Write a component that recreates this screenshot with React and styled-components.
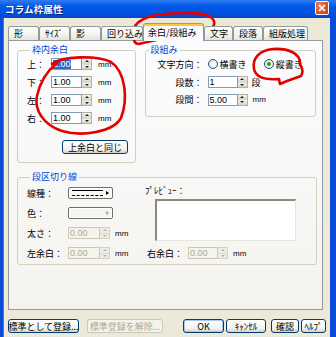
import React from 'react';
import styled, { createGlobalStyle } from 'styled-components';

const GlobalStyle = createGlobalStyle`
  html, body { margin: 0; padding: 0; background: #ECE9D8; }
  body {
    font-family: "Noto Sans CJK JP", "Noto Sans", sans-serif;
    font-size: 9px;
    color: #000;
  }
`;

const Window = styled.div`
  position: relative;
  width: 336px;
  height: 337px;
  overflow: hidden;
  display: flex;
  flex-direction: column;
  background: #ECE9D8;
`;

const TitleBar = styled.div`
  height: 18px;
  flex-shrink: 0;
  display: flex;
  align-items: center;
  justify-content: space-between;
  padding: 0 7px 0 5px;
  background: linear-gradient(#2F7DF2, #0058E8 35%, #0052DD 75%, #0847C4);
`;

const Title = styled.span`
  color: #fff;
  font-weight: bold;
  font-size: 9.5px;
  letter-spacing: 0.2px;
  text-shadow: 1px 1px 0 #0A1E7A;
`;

const CloseBtn = styled.div`
  width: 14px;
  height: 14px;
  box-sizing: border-box;
  margin-top: -2px;
  border: 1px solid #fff;
  border-radius: 2px;
  background: radial-gradient(circle at 35% 35%, #F08A6A, #D8461F 70%, #B93510);
  display: flex;
  align-items: center;
  justify-content: center;
`;

const Frame = styled.div`
  flex: 1;
  display: flex;
  flex-direction: column;
  padding: 5px 7px 0 5px;
  border-left: 3px solid #0A4BD8;
  border-right: 6px solid #0A4BD8;
  box-shadow: inset 1px 0 0 #3D7BEA;
`;

const TabStrip = styled.div`
  display: flex;
  align-items: flex-end;
  height: 17px;
  position: relative;
  z-index: 1;
`;

const Tab = styled.div`
  box-sizing: border-box;
  width: ${p => p.$w}px;
  height: ${p => (p.$active ? 18 : 14)}px;
  margin-bottom: ${p => (p.$active ? -1 : 0)}px;
  padding-left: ${p => (p.$active ? 4 : 5)}px;
  border: 1px solid #919B9C;
  border-bottom: none;
  border-radius: 3px 3px 0 0;
  background: ${p => (p.$active ? '#FCFCFE' : 'linear-gradient(#FFFFFF, #F3F2EC 60%, #E6E4DA)')};
  box-shadow: ${p => (p.$active ? 'inset 0 2px 0 #FFC83C' : 'none')};
  display: flex;
  align-items: center;
  white-space: nowrap;
  overflow: hidden;
  font-size: 9px;
`;

const Panel = styled.div`
  box-sizing: border-box;
  height: 270px;
  border: 1px solid #919B9C;
  background: linear-gradient(#FCFCFE, #F4F3EE);
  padding: 4px 6px 0 8px;
  display: flex;
  flex-direction: column;
  gap: 9px;
`;

const TopRow = styled.div`
  display: flex;
  gap: 9px;
  align-items: flex-start;
`;

const Group = styled.fieldset`
  margin: 0;
  box-sizing: border-box;
  width: ${p => p.$w}px;
  height: ${p => p.$h}px;
  border: 1px solid #D0D0BF;
  border-radius: 3px;
  padding: ${p => p.$pad || '0 0 0 9px'};
`;

const Legend = styled.legend`
  color: #0046D5;
  padding: 0 2px;
  margin-left: 3px;
  font-size: 9px;
  line-height: 10px;
`;

const Row = styled.div`
  display: flex;
  align-items: center;
  height: ${p => p.$h || 18}px;
`;

const Label = styled.span`
  display: inline-block;
  width: ${p => p.$w}px;
  flex-shrink: 0;
  text-align: ${p => (p.$right ? 'right' : 'left')};
  padding-right: ${p => (p.$right ? 5 : 0)}px;
  box-sizing: border-box;
  color: ${p => (p.$dim ? '#000' : '#000')};
  white-space: nowrap;
`;

const Input = styled.div`
  box-sizing: border-box;
  width: ${p => p.$w || 31}px;
  height: 12px;
  border: 1px solid ${p => (p.$disabled ? '#C9C7BA' : '#7F9DB9')};
  background: ${p => (p.$disabled ? '#F5F4EA' : '#fff')};
  color: ${p => (p.$disabled ? '#ACA899' : '#000')};
  font-family: "Liberation Sans", "Noto Sans", sans-serif;
  font-size: 9px;
  line-height: 10px;
  padding-left: 1px;
  display: flex;
  align-items: center;
`;

const Selected = styled.span`
  background: #316AC5;
  color: #fff;
  line-height: 9px;
`;

const SpinBox = styled.div`
  box-sizing: border-box;
  width: ${p => p.$w || 10}px;
  height: 12px;
  display: flex;
  flex-direction: column;
  border: 1px solid ${p => (p.$disabled ? '#D5D2C4' : '#B5B2A4')};
  border-left: none;
  background: ${p => (p.$disabled ? '#F2F1EA' : '#fff')};
`;

const SpinHalf = styled.div`
  flex: 1;
  display: flex;
  align-items: center;
  justify-content: center;
  background: ${p => (p.$disabled ? '#EEEDE5' : 'linear-gradient(#F4F3EE, #D8D4C6)')};
  & + & { border-top: 1px solid ${p => (p.$disabled ? '#DDDAD0' : '#B9B5A5')}; }
`;

const Arrow = styled.div`
  width: 0;
  height: 0;
  border-left: 2px solid transparent;
  border-right: 2px solid transparent;
  ${p => (p.$up ? 'border-bottom' : 'border-top')}: 2px solid ${p => (p.$disabled ? '#B8B5A8' : '#222')};
`;

const Unit = styled.span`
  margin-left: ${p => p.$ml || 5}px;
  font-family: "Liberation Sans", "Noto Sans", sans-serif;
  font-size: ${p => (p.$jp ? 9 : 8)}px;
  ${p => p.$jp && 'font-family: "Noto Sans CJK JP", sans-serif;'}
`;

const Button = styled.div`
  box-sizing: border-box;
  width: ${p => p.$w}px;
  height: ${p => p.$h || 14}px;
  margin-left: ${p => p.$ml || 0}px;
  border: 1px solid ${p => (p.$disabled ? '#C9C7BA' : '#003C74')};
  border-radius: 3px;
  background: ${p => (p.$disabled ? '#F5F4EA' : 'linear-gradient(#FFFFFF, #F3F2EC 70%, #D6D0C5)')};
  box-shadow: ${p => (p.$default ? 'inset 0 0 0 1px #AAC6F4' : 'none')};
  color: ${p => (p.$disabled ? '#ACA899' : '#000')};
  display: flex;
  align-items: center;
  justify-content: center;
  white-space: nowrap;
  overflow: hidden;
  font-size: 9px;
  flex-shrink: 0;
`;

const RadioDot = styled.div`
  box-sizing: border-box;
  width: 10px;
  height: 10px;
  border-radius: 50%;
  border: 1px solid #1C5180;
  background: radial-gradient(circle at 60% 60%, #fff, #DCDBD5);
  display: flex;
  align-items: center;
  justify-content: center;
  margin-right: 2px;
  &::after {
    content: '';
    display: ${p => (p.$checked ? 'block' : 'none')};
    width: 4px;
    height: 4px;
    border-radius: 50%;
    background: #21A121;
  }
`;

const Radio = styled.div`
  display: flex;
  align-items: center;
  margin-right: ${p => p.$mr || 0}px;
`;

const Drop = styled.div`
  box-sizing: border-box;
  width: 45px;
  height: 12px;
  border: 1px solid #6F6F6F;
  border-radius: 2px;
  box-shadow: inset 0 0 0 1px #fff;
  background: ${p => (p.$dim ? '#F5F4EF' : '#F8F8F4')};
  display: flex;
  align-items: center;
  padding: 0 3px 0 3px;
  gap: 3px;
`;

const LineSample = styled.div`
  flex: 1;
  height: 4px;
  border-top: 1px solid #000;
  border-bottom: 1px dashed #000;
`;

const DropArrow = styled.div`
  margin-left: auto;
  width: 0;
  height: 0;
  border-top: 2.5px solid transparent;
  border-bottom: 2.5px solid transparent;
  border-left: 3px solid ${p => (p.$dim ? '#A9A9A0' : '#000')};
`;

const LowerGrid = styled.div`
  display: grid;
  grid-template-columns: 118px 1fr;
  grid-template-rows: repeat(4, 20px);
  margin-top: 1px;
`;

const PreviewCell = styled.div`
  grid-column: 2;
  grid-row: 1 / span 3;
  display: flex;
  flex-direction: column;
  padding-top: 1px;
`;

const PreviewBox = styled.div`
  width: 141px;
  height: 42px;
  box-sizing: border-box;
  margin: 2px 0 0 10px;
  background: #fff;
  border-top: 2px solid #8A8A80;
  border-left: 2px solid #8A8A80;
  border-right: 1px solid #E6E5DE;
  border-bottom: 1px solid #E6E5DE;
`;

const ButtonBar = styled.div`
  display: flex;
  align-items: center;
  margin-top: 9px;
`;

const Overlay = styled.svg`
  position: absolute;
  left: 0;
  top: 0;
  pointer-events: none;
`;

function Spin({ disabled }) {
  return (
    <SpinBox $disabled={disabled}>
      <SpinHalf $disabled={disabled}><Arrow $up $disabled={disabled} /></SpinHalf>
      <SpinHalf $disabled={disabled}><Arrow $disabled={disabled} /></SpinHalf>
    </SpinBox>
  );
}

const margins = ['上：', '下：', '左：', '右：'];

export default function App() {
  return (
    <>
      <GlobalStyle />
      <Window>
        <TitleBar>
          <Title>コラム枠属性</Title>
          <CloseBtn>
            <svg width="8" height="8" viewBox="0 0 8 8">
              <path d="M1 1 L7 7 M7 1 L1 7" stroke="#fff" strokeWidth="1.6" />
            </svg>
          </CloseBtn>
        </TitleBar>

        <Frame>
          <TabStrip>
            <Tab $w={31}>形</Tab>
            <Tab $w={31}>ｻｲｽﾞ</Tab>
            <Tab $w={31}>影</Tab>
            <Tab $w={42}>回り込み</Tab>
            <Tab $w={61} $active>余白/段組み</Tab>
            <Tab $w={29}>文字</Tab>
            <Tab $w={30}>段落</Tab>
            <Tab $w={45}>組版処理</Tab>
          </TabStrip>

          <Panel>
            <TopRow>
              <Group $w={119} $h={118}>
                <Legend>枠内余白</Legend>
                {margins.map((m, i) => (
                  <Row key={m}>
                    <Label $w={24}>{m}</Label>
                    <Input>{i === 0 ? <Selected>1.00</Selected> : '1.00'}</Input>
                    <Spin />
                    <Unit $ml={6}>mm</Unit>
                  </Row>
                ))}
                <Button $w={66} $h={14} $ml={35} style={{ marginTop: 13 }}>上余白と同じ</Button>
              </Group>

              <Group $w={172} $h={72} $pad="0">
                <Legend>段組み</Legend>
                <Row>
                  <Label $w={62} $right>文字方向：</Label>
                  <Radio $mr={17}><RadioDot />横書き</Radio>
                  <Radio><RadioDot $checked />縦書き</Radio>
                </Row>
                <Row>
                  <Label $w={62} $right>段数：</Label>
                  <Input $w={30}>1</Input>
                  <Spin />
                  <Unit $jp $ml={4}>段</Unit>
                </Row>
                <Row $h={17}>
                  <Label $w={62} $right>段間：</Label>
                  <Input $w={30}>5.00</Input>
                  <Spin />
                  <Unit $ml={5}>mm</Unit>
                </Row>
              </Group>
            </TopRow>

            <Group $w={300} $h={93}>
              <Legend>段区切り線</Legend>
              <LowerGrid>
                <Row $h={20}>
                  <Label $w={41}>線種：</Label>
                  <Drop><LineSample /><DropArrow /></Drop>
                </Row>
                <PreviewCell>
                  <span>ﾌﾟﾚﾋﾞｭｰ：</span>
                  <PreviewBox />
                </PreviewCell>
                <Row $h={20}>
                  <Label $w={41}>色：</Label>
                  <Drop $dim><DropArrow $dim /></Drop>
                </Row>
                <Row $h={20}>
                  <Label $w={41}>太さ：</Label>
                  <Input $w={32} $disabled>0.00</Input>
                  <Spin disabled />
                  <Unit $ml={5}>mm</Unit>
                </Row>
                <Row $h={20}>
                  <Label $w={41}>左余白：</Label>
                  <Input $w={32} $disabled>0.00</Input>
                  <Spin disabled />
                  <Unit $ml={5}>mm</Unit>
                </Row>
                <Row $h={20} style={{ paddingLeft: 2 }}>
                  <Label $w={41}>右余白：</Label>
                  <Input $w={30} $disabled>0.00</Input>
                  <Spin disabled />
                  <Unit $ml={5}>mm</Unit>
                </Row>
              </LowerGrid>
            </Group>
          </Panel>

          <ButtonBar>
            <Button $w={71}>標準として登録...</Button>
            <Button $w={76} $ml={8} $disabled>標準登録を解除...</Button>
            <Button $w={41} $ml={20} $default>OK</Button>
            <Button $w={40} $ml={2}>ｷｬﾝｾﾙ</Button>
            <Button $w={28} $ml={5}>確認</Button>
            <Button $w={25} $ml={2}>ﾍﾙﾌﾟ</Button>
          </ButtonBar>
        </Frame>

        <Overlay width="336" height="337" viewBox="0 0 336 337">
          <g fill="none" stroke="#E50000" strokeWidth="2.6" strokeLinecap="round" strokeLinejoin="round">
            <path d="M135 38 C129 26 140 16 165 14 C190 12 211 12 214 21 C217 30 201 34 182 36 C162 38 147 42 139 44 C135 44 133 41 135 37" />
            <path d="M52 64 C62 56 96 55 111 62 C126 72 128 100 121 118 C113 132 82 137 62 131 C43 125 34 109 37 96 C40 82 47 71 57 63" />
            <path d="M300 64 C301 53 287 48 273 49 C259 50 252 59 254 69 C256 78 267 80 279 79 L280 84 L287 81 L301 76 C303 73 303 69 300 64" />
          </g>
        </Overlay>
      </Window>
    </>
  );
}
